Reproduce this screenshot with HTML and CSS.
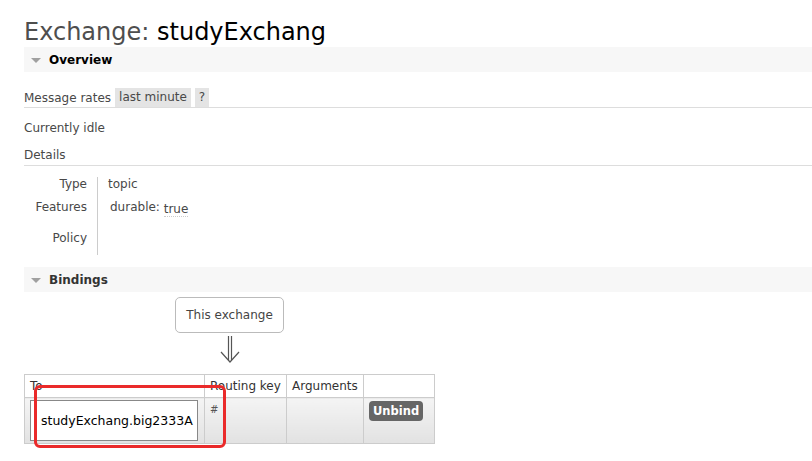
FILE: index.html
```html
<!DOCTYPE html>
<html>
<head>
<meta charset="utf-8">
<link rel="stylesheet" href="styles.css">
</head>
<body>
<div class="main">
  <h1 class="title"><span class="t-gray">Exchange:</span> <span class="t-name">studyExchang</span></h1>

  <div class="section-h"><span class="tri"></span>Overview</div>

  <div class="rates">
    <span>Message rates</span>
    <span class="pill">last minute</span>
    <span class="pill">?</span>
  </div>

  <p class="idle">Currently idle</p>
  <div class="details-h">Details</div>

  <table class="facts">
    <tr class="r1"><th>Type</th><td>topic</td></tr>
    <tr class="r2"><th>Features</th><td><span class="feat">durable:</span> <abbr class="val">true</abbr></td></tr>
    <tr class="r3"><th>Policy</th><td></td></tr>
  </table>

  <div class="section-h bind-h"><span class="tri"></span>Bindings</div>

  <div class="flow">
    <div class="this-ex">This exchange</div>
    <svg class="arrow" width="22" height="28" viewBox="0 0 22 28">
      <path d="M9.5 1 V25 M12.5 1 V25" stroke="#555" stroke-width="1.2" fill="none"/>
      <path d="M2 17 L11 27 L20 17" stroke="#555" stroke-width="1.2" fill="none"/>
    </svg>
  </div>

  <div class="bind-wrap">
    <table class="list">
      <thead>
        <tr><th class="c-to">To</th><th class="c-rk">Routing key</th><th class="c-args">Arguments</th><th class="c-act"></th></tr>
      </thead>
      <tbody>
        <tr>
          <td class="c-to"><div class="dest">studyExchang.big2333A</div></td>
          <td class="c-rk"><span class="hash">#</span></td>
          <td class="c-args"></td>
          <td class="c-act"><span class="btn">Unbind</span></td>
        </tr>
      </tbody>
    </table>
    <div class="mark"></div>
  </div>
</div>
</body>
</html>
```

FILE: styles.css
```css
html, body {
  margin: 0;
  padding: 0;
  background: #fff;
}
body {
  font-family: "DejaVu Sans", Verdana, sans-serif;
  font-size: 12px;
  color: #484848;
  min-height: 461px;
}
.main {
  padding-left: 24px;
  padding-bottom: 12px;
}
.title {
  margin: 0;
  padding-top: 17px;
  height: 30px;
  font-size: 24px;
  font-weight: normal;
  line-height: 30px;
}
.t-gray { color: #4e4e4e; }
.t-name { color: #000; }

.section-h {
  height: 25px;
  background: #f7f7f7;
  display: flex;
  align-items: center;
  font-weight: bold;
  color: #000;
  padding-left: 7px;
}
.bind-h {
  margin-top: 12px;
  color: #333;
}
.tri {
  width: 0;
  height: 0;
  border-left: 5px solid transparent;
  border-right: 5px solid transparent;
  border-top: 5px solid #a0a0a0;
  margin-right: 8px;
  margin-top: 1px;
}

.rates {
  margin-top: 16px;
  height: 19px;
  display: flex;
  align-items: center;
  gap: 4px;
  border-bottom: 1px solid #ddd;
}
.pill {
  background: #e4e4e4;
  height: 19px;
  line-height: 19px;
  padding: 0 4px;
}
.idle {
  margin: 13px 0 0;
  line-height: 15px;
}
.details-h {
  margin-top: 12px;
  line-height: 15px;
  padding-bottom: 2px;
  border-bottom: 1px solid #ddd;
}

.facts {
  border-collapse: collapse;
  margin-top: 11px;
}
.facts th {
  font-weight: normal;
  text-align: right;
  width: 63px;
  padding: 0 10px 0 0;
  vertical-align: top;
  line-height: 15px;
}
.facts td {
  border-left: 1px solid #ccc;
  padding: 0 0 0 10px;
  vertical-align: top;
  line-height: 15px;
}
.facts .r1 th, .facts .r1 td { height: 23px; }
.facts .r2 th, .facts .r2 td { height: 28px; }
.facts .r3 th, .facts .r3 td { height: 24px; padding-top: 3px; }
.feat { margin-left: 2px; }
.val {
  text-decoration: none;
  border-bottom: 1px dotted #ccc;
  position: relative;
  top: 2px;
}

.flow {
  display: flex;
  flex-direction: column;
  align-items: center;
  width: 411px;
  margin-top: 5px;
}
.this-ex {
  border: 1px solid #bbb;
  border-radius: 5px;
  padding: 0 10px;
  height: 34px;
  line-height: 34px;
  color: #444;
}
.arrow {
  display: block;
  margin-top: 2px;
  margin-left: 1px;
}

.bind-wrap {
  position: relative;
  margin-top: 11px;
  width: 411px;
}
.list {
  border-collapse: collapse;
  width: 411px;
}
.list th {
  font-weight: normal;
  text-align: left;
  color: #333;
  height: 22px;
  padding: 0 5px;
  border: 1px solid #ccc;
  background: #fff;
  white-space: nowrap;
}
.list td {
  border: 1px solid #ccc;
  vertical-align: top;
  height: 43px;
  padding: 2px 5px 0;
  background: linear-gradient(#f4f4f4, #e2e2e2);
}
.c-to { width: 169px; }
.c-rk { width: 71px; }
.c-args { width: 66px; }
.dest {
  border: 1px solid #888;
  background: #fff;
  height: 41px;
  line-height: 39px;
  padding-left: 10px;
  color: #000;
  font-size: 12.5px;
  box-sizing: border-box;
  width: 168px;
}
.hash {
  font-size: 10px;
  color: #555;
  position: relative;
  top: 2px;
}
.btn {
  display: inline-block;
  background: #666;
  color: #fff;
  font-weight: bold;
  font-size: 11.5px;
  border-radius: 4px;
  padding: 0 4px;
  height: 20px;
  line-height: 20px;
  margin-top: 1px;
}
.mark {
  position: absolute;
  left: 10px;
  top: 11px;
  width: 186px;
  height: 57px;
  border: 3px solid #ea2a2a;
  border-radius: 6px;
}
```
